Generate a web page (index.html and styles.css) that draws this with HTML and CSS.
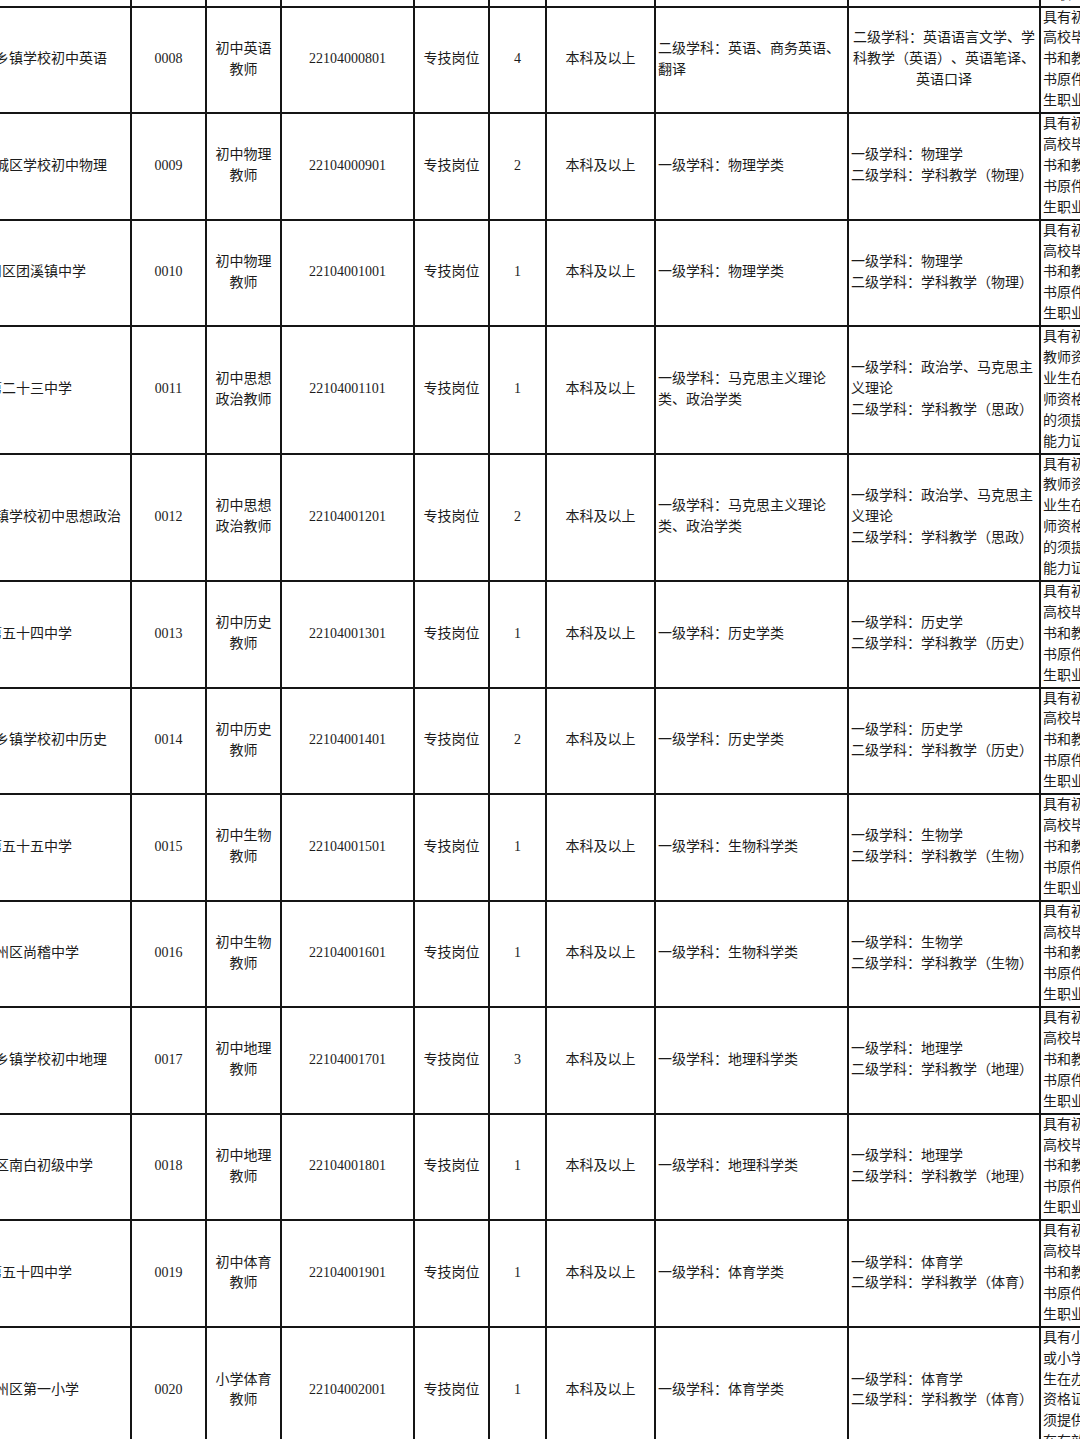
FILE: index.html
```html
<!DOCTYPE html>
<html lang="zh-CN">
<head>
<meta charset="utf-8">
<title>岗位表</title>
<link rel="stylesheet" href="styles.css">
</head>
<body>
<table class="sheet">
  <colgroup>
    <col class="w-unit"><col class="w-code"><col class="w-title"><col class="w-post"><col class="w-type"><col class="w-num"><col class="w-edu"><col class="w-major"><col class="w-major2"><col class="w-req">
  </colgroup>
  <tbody>
    <tr>
      <td class="unit"></td><td></td><td class="title"></td><td></td><td></td><td></td><td></td><td class="left"></td><td class="left"></td>
      <td class="req">具有初中及以上相应学科教师资格证书，2022届<br>高校毕业生须提供毕业证书、学位证<br>书和教师资格证书原件（或教师资格证<br>书原件及教育部学历证书），应届毕业<br>生职业能力证明</td>
    </tr>
    <tr>
      <td class="unit">播州区乡镇学校初中英语</td><td>0008</td><td class="title">初中英语教师</td><td>22104000801</td><td>专技岗位</td><td>4</td><td>本科及以上</td>
      <td class="left">二级学科：英语、商务英语、翻译</td>
      <td>二级学科：英语语言文学、学科教学（英语）、英语笔译、英语口译</td>
      <td class="req">具有初中及以上英语学科教师资格证书，2022届<br>高校毕业生须提供毕业证书、学位证<br>书和教师资格证书原件（或教师资格证<br>书原件及教育部学历证书），应届毕业<br>生职业能力证明</td>
    </tr>
    <tr>
      <td class="unit">汇川区城区学校初中物理</td><td>0009</td><td class="title">初中物理教师</td><td>22104000901</td><td>专技岗位</td><td>2</td><td>本科及以上</td>
      <td class="left">一级学科：物理学类</td>
      <td class="left">一级学科：物理学<br>二级学科：学科教学（物理）</td>
      <td class="req">具有初中及以上物理学科教师资格证书，2022届<br>高校毕业生须提供毕业证书、学位证<br>书和教师资格证书原件（或教师资格证<br>书原件及教育部学历证书），应届毕业<br>生职业能力证明</td>
    </tr>
    <tr>
      <td class="unit">汇川区团溪镇中学</td><td>0010</td><td class="title">初中物理教师</td><td>22104001001</td><td>专技岗位</td><td>1</td><td>本科及以上</td>
      <td class="left">一级学科：物理学类</td>
      <td class="left">一级学科：物理学<br>二级学科：学科教学（物理）</td>
      <td class="req">具有初中及以上物理学科教师资格证书，2022届<br>高校毕业生须提供毕业证书、学位证<br>书和教师资格证书原件（或教师资格证<br>书原件及教育部学历证书），应届毕业<br>生职业能力证明</td>
    </tr>
    <tr>
      <td class="unit">第二十三中学</td><td>0011</td><td class="title">初中思想政治教师</td><td>22104001101</td><td>专技岗位</td><td>1</td><td>本科及以上</td>
      <td class="left">一级学科：马克思主义理论类、政治学类</td>
      <td class="left">一级学科：政治学、马克思主义理论<br>二级学科：学科教学（思政）</td>
      <td class="req">具有初中及以上思想政治学科<br>教师资格证书；2022年应届毕<br>业生在办理聘用手续时未取得教<br>师资格证书的，尚未取得证书<br>的须提供教师资格考试合格证明或<br>能力证明</td>
    </tr>
    <tr>
      <td class="unit">播州区乡镇学校初中思想政治</td><td>0012</td><td class="title">初中思想政治教师</td><td>22104001201</td><td>专技岗位</td><td>2</td><td>本科及以上</td>
      <td class="left">一级学科：马克思主义理论类、政治学类</td>
      <td class="left">一级学科：政治学、马克思主义理论<br>二级学科：学科教学（思政）</td>
      <td class="req">具有初中及以上思想政治学科<br>教师资格证书；2022年应届毕<br>业生在办理聘用手续时未取得教<br>师资格证书的，尚未取得证书<br>的须提供教师资格考试合格证明或<br>能力证明</td>
    </tr>
    <tr>
      <td class="unit">第五十四中学</td><td>0013</td><td class="title">初中历史教师</td><td>22104001301</td><td>专技岗位</td><td>1</td><td>本科及以上</td>
      <td class="left">一级学科：历史学类</td>
      <td class="left">一级学科：历史学<br>二级学科：学科教学（历史）</td>
      <td class="req">具有初中及以上历史学科教师资格证书，2022届<br>高校毕业生须提供毕业证书、学位证<br>书和教师资格证书原件（或教师资格证<br>书原件及教育部学历证书），应届毕业<br>生职业能力证明</td>
    </tr>
    <tr>
      <td class="unit">播州区乡镇学校初中历史</td><td>0014</td><td class="title">初中历史教师</td><td>22104001401</td><td>专技岗位</td><td>2</td><td>本科及以上</td>
      <td class="left">一级学科：历史学类</td>
      <td class="left">一级学科：历史学<br>二级学科：学科教学（历史）</td>
      <td class="req">具有初中及以上历史学科教师资格证书，2022届<br>高校毕业生须提供毕业证书、学位证<br>书和教师资格证书原件（或教师资格证<br>书原件及教育部学历证书），应届毕业<br>生职业能力证明</td>
    </tr>
    <tr>
      <td class="unit">第五十五中学</td><td>0015</td><td class="title">初中生物教师</td><td>22104001501</td><td>专技岗位</td><td>1</td><td>本科及以上</td>
      <td class="left">一级学科：生物科学类</td>
      <td class="left">一级学科：生物学<br>二级学科：学科教学（生物）</td>
      <td class="req">具有初中及以上生物学科教师资格证书，2022届<br>高校毕业生须提供毕业证书、学位证<br>书和教师资格证书原件（或教师资格证<br>书原件及教育部学历证书），应届毕业<br>生职业能力证明</td>
    </tr>
    <tr>
      <td class="unit">播州区尚稽中学</td><td>0016</td><td class="title">初中生物教师</td><td>22104001601</td><td>专技岗位</td><td>1</td><td>本科及以上</td>
      <td class="left">一级学科：生物科学类</td>
      <td class="left">一级学科：生物学<br>二级学科：学科教学（生物）</td>
      <td class="req">具有初中及以上生物学科教师资格证书，2022届<br>高校毕业生须提供毕业证书、学位证<br>书和教师资格证书原件（或教师资格证<br>书原件及教育部学历证书），应届毕业<br>生职业能力证明</td>
    </tr>
    <tr>
      <td class="unit">播州区乡镇学校初中地理</td><td>0017</td><td class="title">初中地理教师</td><td>22104001701</td><td>专技岗位</td><td>3</td><td>本科及以上</td>
      <td class="left">一级学科：地理科学类</td>
      <td class="left">一级学科：地理学<br>二级学科：学科教学（地理）</td>
      <td class="req">具有初中及以上地理学科教师资格证书，2022届<br>高校毕业生须提供毕业证书、学位证<br>书和教师资格证书原件（或教师资格证<br>书原件及教育部学历证书），应届毕业<br>生职业能力证明</td>
    </tr>
    <tr>
      <td class="unit">播州区南白初级中学</td><td>0018</td><td class="title">初中地理教师</td><td>22104001801</td><td>专技岗位</td><td>1</td><td>本科及以上</td>
      <td class="left">一级学科：地理科学类</td>
      <td class="left">一级学科：地理学<br>二级学科：学科教学（地理）</td>
      <td class="req">具有初中及以上地理学科教师资格证书，2022届<br>高校毕业生须提供毕业证书、学位证<br>书和教师资格证书原件（或教师资格证<br>书原件及教育部学历证书），应届毕业<br>生职业能力证明</td>
    </tr>
    <tr>
      <td class="unit">第五十四中学</td><td>0019</td><td class="title">初中体育教师</td><td>22104001901</td><td>专技岗位</td><td>1</td><td>本科及以上</td>
      <td class="left">一级学科：体育学类</td>
      <td class="left">一级学科：体育学<br>二级学科：学科教学（体育）</td>
      <td class="req">具有初中及以上体育学科教师资格证书，2022届<br>高校毕业生须提供毕业证书、学位证<br>书和教师资格证书原件（或教师资格证<br>书原件及教育部学历证书），应届毕业<br>生职业能力证明</td>
    </tr>
    <tr>
      <td class="unit">播州区第一小学</td><td>0020</td><td class="title">小学体育教师</td><td>22104002001</td><td>专技岗位</td><td>1</td><td>本科及以上</td>
      <td class="left">一级学科：体育学类</td>
      <td class="left">一级学科：体育学<br>二级学科：学科教学（体育）</td>
      <td class="req">具有小学及以上体育学科教师资格证书<br>或小学体育教师资格考试合格证明，毕业<br>生在办理聘用手续时未取得教师<br>资格证书的，尚未取得教师资格证书的<br>须提供教师资格考试合格证明<br>在有效期内</td>
    </tr>
  </tbody>
</table>
</body>
</html>
```

FILE: styles.css
```css
html, body {
  margin: 0;
  padding: 0;
  background: #ffffff;
  overflow: hidden;
}

.sheet {
  border-collapse: collapse;
  table-layout: fixed;
  width: 1411px;
  margin: -101px 0 0 -72px;
  font-family: "Liberation Serif", "Noto Sans CJK SC", serif;
  font-size: 14px;
  line-height: 20.9px;
  color: #1c1c1c;
  text-spacing-trim: space-all;
}

.w-unit { width: 202px; }
.w-code { width: 75px; }
.w-title { width: 75px; }
.w-post { width: 133px; }
.w-type { width: 75px; }
.w-num { width: 57px; }
.w-edu { width: 109px; }
.w-major { width: 193px; }
.w-major2 { width: 192px; }
.w-req { width: 300px; }

.sheet td {
  border: 2px solid #151515;
  padding: 0;
  text-align: center;
  vertical-align: middle;
}

.sheet td.unit {
  white-space: nowrap;
  overflow: hidden;
}

.sheet td.title {
  padding: 0 7px;
}

.sheet td.left {
  text-align: left;
  padding-left: 2px;
}

.sheet td.req {
  text-align: left;
  padding-left: 2px;
  white-space: nowrap;
  overflow: hidden;
}
```
